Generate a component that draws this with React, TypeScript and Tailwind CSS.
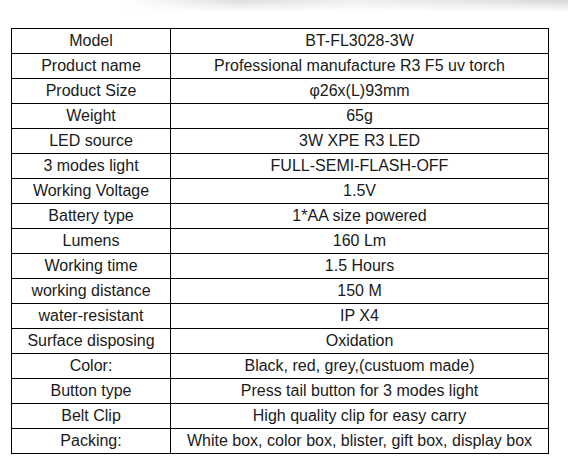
const ROWS = [
  ['Model', 'BT-FL3028-3W'],
  ['Product name', 'Professional manufacture R3 F5 uv torch'],
  ['Product Size', 'φ26x(L)93mm'],
  ['Weight', '65g'],
  ['LED source', '3W XPE R3 LED'],
  ['3 modes light', 'FULL-SEMI-FLASH-OFF'],
  ['Working Voltage', '1.5V'],
  ['Battery type', '1*AA size powered'],
  ['Lumens', '160 Lm'],
  ['Working time', '1.5 Hours'],
  ['working distance', '150 M'],
  ['water-resistant', 'IP X4'],
  ['Surface disposing', 'Oxidation'],
  ['Color:', 'Black, red, grey,(custuom made)'],
  ['Button type', 'Press tail button for 3 modes light'],
  ['Belt Clip', 'High quality clip for easy carry'],
  ['Packing:', 'White box, color box, blister, gift box, display box'],
]

export default function App() {
  return (
    <div className="h-[472px] w-[568px] bg-white font-['Liberation_Sans',Arial,sans-serif] text-[#1a1a1a]">
      {/* fading shadow strip at the top */}
      <div className="h-[12px] w-full bg-[linear-gradient(to_bottom,rgba(255,255,255,0)_0%,#fff_100%),linear-gradient(to_right,#fff_0%,#fff_22%,#dddddd_42%,#efefed_62%,#e4e4e4_82%,#d6d6d6_100%)]" />
      <table className="mt-[16px] ml-[11px] w-[538px] table-fixed border-collapse">
        <colgroup>
          <col className="w-[159px]" />
          <col />
        </colgroup>
        <tbody>
          {ROWS.map(([label, value]) => (
            <tr key={label} className="h-[25px]">
              <td className="border border-black p-0 text-center text-[16px] leading-[24px]">
                {label}
              </td>
              <td className="border border-black p-0 text-center text-[16px] leading-[24px]">
                {value}
              </td>
            </tr>
          ))}
        </tbody>
      </table>
    </div>
  )
}
